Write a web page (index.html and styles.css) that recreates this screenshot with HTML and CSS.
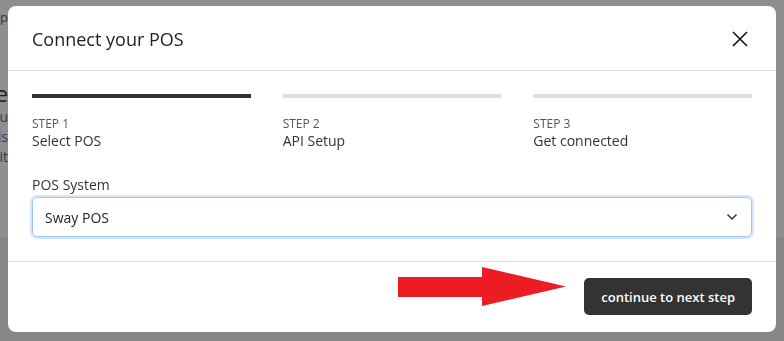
FILE: index.html
```html
<!DOCTYPE html>
<html lang="en">
<head>
    <meta charset="UTF-8">
    <meta name="viewport" content="width=device-width, initial-scale=1.0">
    <title>Connect your POS</title>
    <link rel="stylesheet" href="styles.css">
</head>
<body>
    <div class="page">
        <div class="page-top">
            <div class="page-lines">
                <span class="page-small">Shop</span>
                <span class="page-heading">Store</span>
                <span class="page-text">You</span>
                <span class="page-text">Tools</span>
                <span class="page-text">Edit</span>
            </div>
        </div>
        <div class="page-bottom"></div>
    </div>

    <div class="backdrop">
        <div class="modal">
            <div class="modal-header">
                <h2 class="modal-title">Connect your POS</h2>
                <button class="close-btn" aria-label="Close">
                    <svg width="16" height="16" viewBox="0 0 16 16">
                        <path d="M1 1 L15 15 M15 1 L1 15" stroke="#111" stroke-width="1.6" fill="none"/>
                    </svg>
                </button>
            </div>

            <div class="modal-body">
                <div class="steps">
                    <div class="step active">
                        <div class="step-bar"></div>
                        <div class="step-num">STEP 1</div>
                        <div class="step-name">Select POS</div>
                    </div>
                    <div class="step">
                        <div class="step-bar"></div>
                        <div class="step-num">STEP 2</div>
                        <div class="step-name">API Setup</div>
                    </div>
                    <div class="step">
                        <div class="step-bar"></div>
                        <div class="step-num">STEP 3</div>
                        <div class="step-name">Get connected</div>
                    </div>
                </div>

                <label class="field-label">POS System</label>
                <div class="select">
                    <span>Sway POS</span>
                    <svg width="12" height="8" viewBox="0 0 12 8">
                        <path d="M1.5 1.5 L6 6 L10.5 1.5" stroke="#333" stroke-width="1.5" fill="none"/>
                    </svg>
                </div>
            </div>

            <div class="modal-footer">
                <svg class="arrow" width="168" height="40" viewBox="0 0 168 40">
                    <polygon points="0,10 84,10 84,0 168,19.5 84,39 84,30 0,30" fill="#ed1c24"/>
                </svg>
                <button class="btn-next">continue to next step</button>
            </div>
        </div>
    </div>
</body>
</html>
```

FILE: styles.css
```css
body {
    margin: 0;
    font-family: "Open Sans", "Noto Sans", sans-serif;
    color: #333;
    overflow: hidden;
}
.page {
    height: 341px;
    display: flex;
    flex-direction: column;
}
.page-top {
    height: 237px;
    background: #fff;
}
.page-bottom {
    flex: 1;
    background: #f3f3f3;
}
.page-lines {
    width: 8px;
    display: flex;
    flex-direction: column;
    align-items: flex-end;
    padding-top: 9px;
    white-space: nowrap;
}
.page-small {
    font-size: 13px;
    color: #666;
    line-height: 16px;
}
.page-heading {
    font-size: 22px;
    color: #333;
    margin-top: 54px;
    line-height: 28px;
}
.page-text {
    font-size: 14px;
    color: #6a6a80;
    line-height: 20px;
}

/* modal */
.backdrop {
    position: fixed;
    inset: 0;
    background: rgba(0, 0, 0, 0.44);
    padding: 6px 8px;
}
.modal {
    width: 768px;
    background: #fff;
    border-radius: 8px;
    overflow: hidden;
}
.modal-header {
    height: 64px;
    padding: 0 24px;
    display: flex;
    align-items: center;
    justify-content: space-between;
    border-bottom: 1px solid #dedede;
}
.modal-title {
    margin: 0;
    font-size: 18px;
    font-weight: 400;
    color: #222;
    padding-top: 2px;
}
.close-btn {
    width: 24px;
    height: 24px;
    padding: 0;
    border: none;
    background: none;
    display: flex;
    align-items: center;
    justify-content: center;
    margin-top: 2px;
}
.modal-body {
    padding: 23px 24px 24px;
}
.steps {
    display: grid;
    grid-template-columns: repeat(3, 1fr);
    gap: 32px;
    margin-bottom: 27px;
}
.step-bar {
    height: 4px;
    background: #ddd;
    margin-bottom: 19px;
}
.step.active .step-bar {
    background: #333;
}
.step-num {
    font-size: 12px;
    line-height: 14px;
    color: #555;
}
.step-name {
    font-size: 14px;
    line-height: 16px;
    color: #333;
    margin-top: 2px;
}
.field-label {
    display: block;
    font-size: 14px;
    line-height: 18px;
    margin-bottom: 3px;
    color: #333;
}
.select {
    height: 38px;
    border: 1px solid #9ec5fe;
    border-radius: 5px;
    box-shadow: 0 0 0 2px #d6e6fe;
    padding: 0 13px 0 12px;
    display: flex;
    align-items: center;
    justify-content: space-between;
    font-size: 14px;
    color: #222;
}
.modal-footer {
    border-top: 1px solid #dedede;
    padding: 16px 24px 17px;
    display: flex;
    justify-content: flex-end;
    align-items: flex-start;
    gap: 18px;
}
.arrow {
    display: block;
    margin-top: -11px;
}
.btn-next {
    height: 37px;
    padding: 0 17px;
    background: #333;
    color: #fff;
    border: none;
    border-radius: 5px;
    font-family: inherit;
    font-size: 13px;
    font-weight: 600;
}
```
